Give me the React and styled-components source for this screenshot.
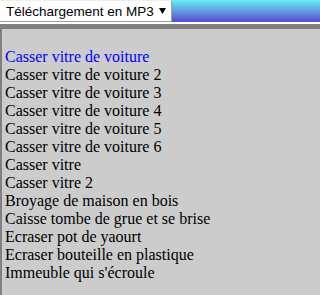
import React from "react";
import styled, { createGlobalStyle } from "styled-components";

const Global = createGlobalStyle`
  html, body { margin: 0; padding: 0; background: #ffffff; overflow: hidden; }
  #root { min-height: 100vh; display: flex; flex-direction: column; }
`;

const Page = styled.div`
  display: flex;
  flex-direction: column;
  flex: 1;
  gap: 2px;
`;

const Header = styled.div`
  display: flex;
  height: 22px;
  background: linear-gradient(#68eef2, #5a48d6);
`;

const Select = styled.div`
  box-sizing: border-box;
  width: 172px;
  height: 22px;
  background: #ffffff;
  border-top: 1px solid #eeeeee;
  border-right: 1px solid #a0a0a0;
  border-bottom: 1px solid #a0a0a0;
  padding: 1px 0 0 6px;
  display: flex;
  align-items: center;
  font-family: Arial, "Liberation Sans", sans-serif;
  font-size: 13.5px;
  color: #000;
`;

const Label = styled.span`
  width: 153px;
`;

const Arrow = styled.svg`
  width: 7px;
  height: 6px;
  margin-top: -2px;
`;

const Frame = styled.div`
  flex: 1;
  background: #cccccc;
  border-top: 5px solid #808080;
  border-left: 2px solid #808080;
  padding: 19px 0 0 3px;
  font-family: "Times New Roman", "Liberation Serif", serif;
  font-size: 16px;
  line-height: 18px;
`;

const Item = styled.div`
  color: ${(p) => (p.$active ? "#0000ff" : "#000000")};
  white-space: nowrap;
`;

const items = [
  "Casser vitre de voiture",
  "Casser vitre de voiture 2",
  "Casser vitre de voiture 3",
  "Casser vitre de voiture 4",
  "Casser vitre de voiture 5",
  "Casser vitre de voiture 6",
  "Casser vitre",
  "Casser vitre 2",
  "Broyage de maison en bois",
  "Caisse tombe de grue et se brise",
  "Ecraser pot de yaourt",
  "Ecraser bouteille en plastique",
  "Immeuble qui s'écroule",
];

export default function App() {
  return (
    <>
      <Global />
      <Page>
        <Header>
          <Select>
            <Label>Téléchargement en MP3</Label>
            <Arrow viewBox="0 0 7 6">
              <polygon points="0,0 7,0 3.5,6" fill="#000" />
            </Arrow>
          </Select>
        </Header>
        <Frame>
          {items.map((t, i) => (
            <Item key={t} $active={i === 0}>
              {t}
            </Item>
          ))}
        </Frame>
      </Page>
    </>
  );
}
